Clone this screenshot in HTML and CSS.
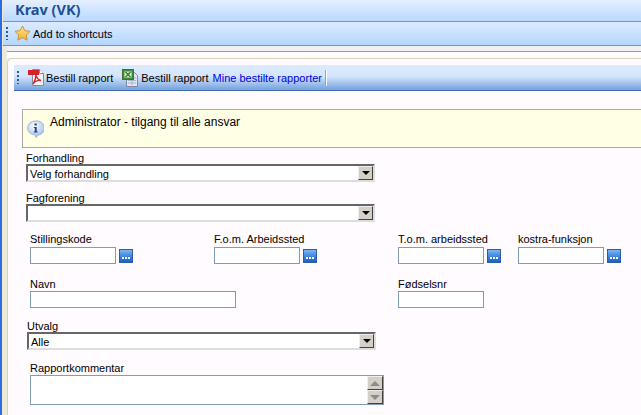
FILE: index.html
```html
<!DOCTYPE html>
<html lang="no">
<head>
<meta charset="utf-8">
<title>Krav (VK)</title>
<link rel="stylesheet" href="styles.css">
</head>
<body>
<div class="edge">
  <header class="title-bar"><h1>Krav (VK)</h1></header>
  <div class="shortcut-bar">
    <span class="grip"></span>
    <svg class="star" width="17" height="17" viewBox="0 0 17 17"><defs><linearGradient id="s" x1="0" y1="0" x2="0" y2="1"><stop offset="0" stop-color="#ffe98a"/><stop offset="1" stop-color="#f5ae2c"/></linearGradient></defs><path d="M8.500 1l2.300 4.600 5.200.8-3.700 3.600.9 5.200-4.700-2.500-4.700 2.500.9-5.200L1 6.400l5.200-.8z" fill="url(#s)" stroke="#c8933a" stroke-width="1" stroke-linejoin="round"/></svg>
    <span>Add to shortcuts</span>
  </div>
  <div class="content">
    <div class="strip"></div>
    <div class="panel">
      <div class="toolbar">
        <span class="grip"></span>
        <svg class="pdf" width="16" height="17" viewBox="0 0 16 17"><path d="M4.500.5h7l4 4v12h-11z" fill="#f4f4f4" stroke="#8a8a96"/><path d="M11.500.5v4h4" fill="#fff" stroke="#8a8a96"/><rect x="0" y="1" width="11" height="5" fill="#d3222a"/><path d="M5 15c2-3 3-6 2.800-9 1 3 2.500 5 5.200 5.500-3-.3-6 .8-8 3.500z" fill="none" stroke="#d3222a" stroke-width="1.300"/></svg>
        <span class="tool">Bestill rapport</span>
        <svg class="xls" width="17" height="18" viewBox="0 0 17 18"><path d="M4.500 3.500h8l3 3v11h-11z" fill="#dfe6f2" stroke="#7c88a4"/><path d="M6 9h8M6 11.500h8M6 14h8M10 7v9" stroke="#a9b6cc"/><rect x="0.500" y="0.500" width="11" height="10" fill="#3d8f3d" stroke="#4c6b2c"/><rect x="2.500" y="2.500" width="7" height="6" fill="#e6f2dc"/><path d="M3.500 3l5 5M8.500 3l-5 5" stroke="#2c7a2c" stroke-width="1.400"/></svg>
        <span class="tool">Bestill rapport</span>
        <span class="link">Mine bestilte rapporter</span>
        <span class="sep"></span>
      </div>
      <div class="notice">
        <svg class="info" width="17" height="18" viewBox="0 0 17 18"><defs><radialGradient id="i" cx=".4" cy=".3" r=".8"><stop offset="0" stop-color="#ffffff"/><stop offset="1" stop-color="#8fb4e4"/></radialGradient></defs><path d="M8.500 1a7.500 6.800 0 0 1 2.500 14.200L9 17.500l-.8-2.500A7.500 6.800 0 0 1 8.500 1z" fill="url(#i)" stroke="#9db6d6"/><rect x="7.500" y="3.500" width="2.200" height="2" fill="#1c3f94"/><path d="M6.800 7h2.900v4.500h1v1H6.800v-1h1V8h-1z" fill="#1c3f94"/></svg>
        <span>Administrator - tilgang til alle ansvar</span>
      </div>
      <label class="label wide">Forhandling</label>
      <div class="select"><span class="value">Velg forhandling</span><span class="drop"><i></i></span></div>
      <label class="label wide second">Fagforening</label>
      <div class="select"><span class="value"></span><span class="drop"><i></i></span></div>
      <div class="fields">
        <div class="field"><label class="label">Stillingskode</label><div class="pick"><div class="input"></div><span class="dots"><b></b><b></b><b></b></span></div></div>
        <div class="field"><label class="label">F.o.m. Arbeidssted</label><div class="pick"><div class="input"></div><span class="dots"><b></b><b></b><b></b></span></div></div>
        <div class="field"><label class="label">T.o.m. arbeidssted</label><div class="pick"><div class="input"></div><span class="dots"><b></b><b></b><b></b></span></div></div>
        <div class="field"><label class="label">kostra-funksjon</label><div class="pick"><div class="input"></div><span class="dots"><b></b><b></b><b></b></span></div></div>
        <div class="field span2"><label class="label">Navn</label><div class="input long"></div></div>
        <div class="field"><label class="label">Fødselsnr</label><div class="input"></div></div>
      </div>
      <label class="label utvalg">Utvalg</label>
      <div class="select shifted"><span class="value">Alle</span><span class="drop"><i></i></span></div>
      <label class="label comment-label">Rapportkommentar</label>
      <div class="comment">
        <div class="scroll">
          <span class="arrow"><i class="up"></i></span>
          <span class="arrow"><i class="down"></i></span>
        </div>
      </div>
    </div>
  </div>
</div>
</body>
</html>
```
FILE: styles.css
```css
* { box-sizing: border-box; }
html, body { margin: 0; height: 100%; }
body {
  width: 641px; height: 415px; overflow: hidden;
  background: #2b6de0;
  font-family: "Liberation Sans", sans-serif;
  font-size: 11px;
  color: #000;
}
.edge { margin-left: 2px; height: 415px; background: #ece9d8; padding-left: 1px; overflow: hidden; }
.title-bar {
  height: 22px; padding-left: 12px;
  background: linear-gradient(#e4efff, #b9d9ff);
  border-bottom: 1px solid #6a98d2;
}
.title-bar h1 { margin: 0; font-family: "Noto Sans", sans-serif; font-size: 14.5px; line-height: 18px; font-weight: bold; color: #1d4f97; }
.shortcut-bar {
  height: 24px; display: flex; align-items: center; padding-left: 3px;
  background: linear-gradient(#dcebff, #b5d6ff);
  border-bottom: 1px solid #6a98d2;
}
.grip {
  width: 2px; height: 13px; flex: none;
  background: repeating-linear-gradient(#2a5a9e 0 2px, transparent 2px 4px);
}
.star { margin-left: 6px; margin-right: 2px; }
.content { margin-left: 4px; height: 369px; background: #f0f0f0; padding-top: 5px; }
.strip { height: 7px; background: #fffbff; border-top: 1px solid #999; }
.panel { height: 357px; background: #fffbff; border-top: 1px solid #d6d2b8; border-left: 1px solid #d6d2b8; border-top-left-radius: 5px; padding-top: 6px; }
.toolbar {
  height: 26px; margin-left: 6px; display: flex; align-items: center; padding-left: 3px;
  background: linear-gradient(#dcebff 0, #d4e5fd 45%, #7da7e0 95%);
  border-bottom: 1px solid #3f69ae;
}
.pdf { margin-left: 9px; margin-right: 2px; }
.xls { margin-left: 9px; margin-right: 2px; }
.link { margin-left: 4px; color: #0000e0; }
.sep { width: 1px; height: 16px; background: #8aa6cf; border-right: 1px solid #fff; margin-left: 3px; box-sizing: content-box; }
.notice {
  height: 39px; margin: 18px 0 0 14px; display: flex; align-items: flex-start; padding: 5px 0 0 4px; gap: 6px;
  background: #ffffe6; border: 1px solid #aaa9a0; border-right: 0;
  font-size: 12px;
}
.info { margin-top: 5px; flex: none; }
.label { display: block; height: 12px; line-height: 12px; white-space: nowrap; }
.wide { margin: 4px 0 0 18px; }
.second { margin-top: 10px; }
.select {
  width: 349px; height: 18px; margin: 0 0 0 18px; display: flex; justify-content: space-between;
  background: #fff;
  border: 2px solid; border-color: #666 #ddd #ddd #666;
}
.select .value { padding-left: 2px; line-height: 16px; }
.select.shifted { margin-left: 19px; }
.drop {
  width: 15px; height: 14px; background: #d4d0c8; display: flex; align-items: center; justify-content: center;
  border: 1px solid; border-color: #eee #404040 #404040 #eee;
}
.drop i { width: 0; height: 0; border: 4px solid transparent; border-top-color: #000; border-bottom: 0; }
.fields { display: grid; grid-template-columns: 184px 184px 120px 120px; margin: 11px 0 0 22px; row-gap: 14px; }
.span2 { grid-column: span 2; }
.pick { display: flex; align-items: center; gap: 3px; height: 17px; margin-top: 2px; }
.input { width: 86px; height: 17px; margin-top: 1px; background: #fff; border: 1px solid #7f9db9; }
.pick .input { margin-top: 0; }
.input.long { width: 206px; }
.dots {
  width: 14px; height: 14px; display: flex; align-items: flex-end; justify-content: center; gap: 1px; padding-bottom: 3px;
  background: linear-gradient(#7fb5ee, #3a85de 55%, #1e5fc0); border: 1px solid #2a5ea8;
}
.dots b { width: 2px; height: 2px; background: #fff; }
.utvalg { margin: 12px 0 0 19px; }
.comment-label { margin: 12px 0 0 22px; }
.comment {
  width: 354px; height: 30px; margin: 1px 0 0 22px; background: #fff; border: 1px solid #7f9db9;
  display: flex; justify-content: flex-end;
}
.scroll { width: 16px; display: flex; flex-direction: column; }
.arrow {
  flex: 1; background: #d4d0c8; display: flex; align-items: center; justify-content: center;
  border: 1px solid; border-color: #eee #404040 #404040 #eee;
}
.arrow i { width: 0; height: 0; border: 5px solid transparent; }
.arrow .up { border-bottom-color: #8c8c8c; border-top: 0; }
.arrow .down { border-top-color: #8c8c8c; border-bottom: 0; }
```
